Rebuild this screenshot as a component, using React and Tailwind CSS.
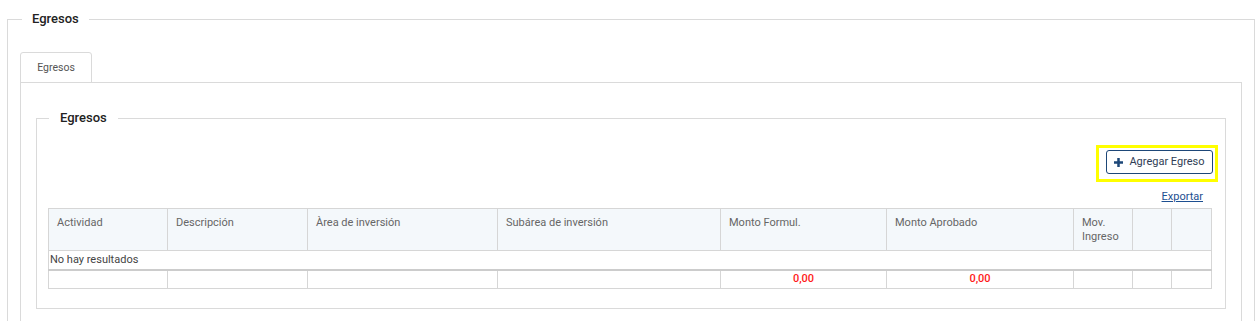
const columns = [
  { label: 'Actividad', width: 119 },
  { label: 'Descripción', width: 140 },
  { label: 'Àrea de inversión', width: 190 },
  { label: 'Subárea de inversión', width: 223 },
  { label: 'Monto Formul.', width: 166 },
  { label: 'Monto Aprobado', width: 187 },
  { label: 'Mov. Ingreso', width: 59 },
  { label: '', width: 39 },
  { label: '', width: 40 },
];

const totals = ['', '', '', '', '0,00', '0,00', '', '', ''];

function PlusIcon() {
  return (
    <svg width="9" height="9" viewBox="0 0 9 9" className="text-[#1d4778]">
      <rect x="3.25" y="0" width="2.5" height="9" fill="currentColor" />
      <rect x="0" y="3.25" width="9" height="2.5" fill="currentColor" />
    </svg>
  );
}

function App() {
  return (
    <div
      className="min-h-screen bg-white pl-[7px] pr-[3px] pt-[11px] text-[#333]"
      style={{ fontFamily: 'Roboto, "Liberation Sans", sans-serif' }}
    >
      <fieldset className="border border-[#dadada] px-[12px] pb-0">
        <legend className="ml-[2px] px-[10px] text-[13px] font-medium leading-[16px] text-[#222]">
          Egresos
        </legend>

        <div className="pt-[25px]">
          <div className="flex">
            <div className="flex h-[31px] w-[72px] items-center justify-center rounded-t-[3px] border border-[#dadada] text-[10.5px] text-[#555]">
              Egresos
            </div>
          </div>

          <div className="-mt-px border border-[#dadada] px-[15px] pb-[40px] pt-[27px]">
            <fieldset className="border border-[#dadada] pl-[11px] pr-[13px] pb-[19px]">
              <legend className="ml-px px-[11px] text-[13px] font-medium leading-[16px] text-[#222]">
                Egresos
              </legend>

              <div className="mt-[19px] flex justify-end">
                <div className="-mr-[6px] border-[3px] border-[#ffff00] pb-[5px] pl-[7px] pr-[2px] pt-[2px]">
                  <button className="flex h-[24px] w-[107px] items-center justify-center gap-[6px] rounded-[3px] border border-[#1d4778] bg-white text-[11px] text-[#2f3d55]">
                    <PlusIcon />
                    Agregar Egreso
                  </button>
                </div>
              </div>

              <div className="mt-[8px] flex justify-end pr-[9px]">
                <a href="#" className="text-[11px] leading-[14px] text-[#1d4f91] underline">
                  Exportar
                </a>
              </div>

              <table className="mt-[4px] w-full table-fixed border-collapse text-[11px] text-[#666]">
                <colgroup>
                  {columns.map((c, i) => (
                    <col key={i} style={{ width: c.width }} />
                  ))}
                </colgroup>
                <thead>
                  <tr className="bg-[#f4f8fb]">
                    {columns.map((c, i) => (
                      <th
                        key={i}
                        className="h-[41px] border border-[#d6d6d6] px-[8px] pb-[6px] pt-[7px] text-left align-top font-normal leading-[14px]"
                      >
                        {c.label}
                      </th>
                    ))}
                  </tr>
                </thead>
                <tbody>
                  <tr>
                    <td
                      colSpan={columns.length}
                      className="h-[19px] border border-[#d6d6d6] px-[1px] text-[#444] leading-[14px]"
                    >
                      No hay resultados
                    </td>
                  </tr>
                </tbody>
                <tfoot>
                  <tr>
                    {totals.map((t, i) => (
                      <td
                        key={i}
                        className="h-[19px] border border-[#d6d6d6] border-t-[2px] border-t-[#cccccc] text-center font-medium leading-[14px] text-[#ff1a1a]"
                      >
                        {t}
                      </td>
                    ))}
                  </tr>
                </tfoot>
              </table>
            </fieldset>
          </div>
        </div>
      </fieldset>
    </div>
  );
}

export default App;
